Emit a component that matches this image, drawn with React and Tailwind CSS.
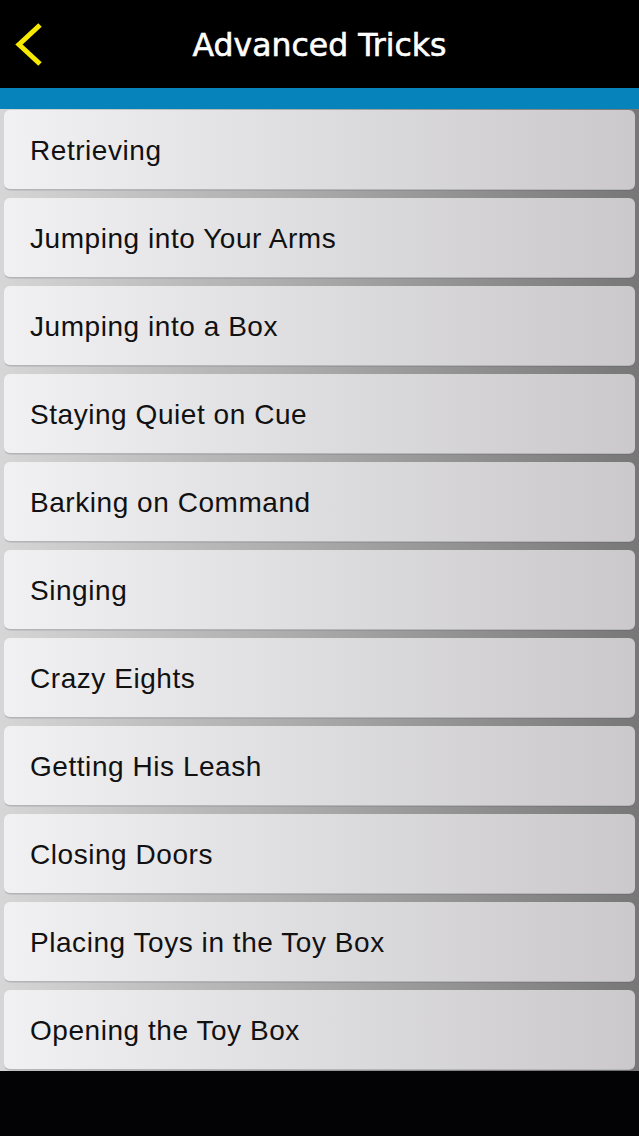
import React from "react";

const items = [
  "Retrieving",
  "Jumping into Your Arms",
  "Jumping into a Box",
  "Staying Quiet on Cue",
  "Barking on Command",
  "Singing",
  "Crazy Eights",
  "Getting His Leash",
  "Closing Doors",
  "Placing Toys in the Toy Box",
  "Opening the Toy Box",
];

export default function App() {
  return (
    <div className="w-[639px] h-[1136px] bg-black flex flex-col overflow-hidden">
      <div className="h-[88px] bg-black flex items-center justify-center relative">
        <svg
          className="absolute left-[12px] top-[22px]"
          width="34"
          height="46"
          viewBox="0 0 34 46"
        >
          <path
            d="M28 3 L7 22.5 L28 42"
            fill="none"
            stroke="#f7ea00"
            strokeWidth="5"
            strokeLinecap="butt"
            strokeLinejoin="miter"
          />
        </svg>
        <span
          className="text-white text-[31.5px] leading-none mt-[3px] [-webkit-text-stroke:0.6px_white]"
          style={{ fontFamily: '"DejaVu Sans", sans-serif' }}
        >
          Advanced Tricks
        </span>
      </div>
      <div className="h-[21px] bg-[#0683bb]" />
      <div className="flex flex-col gap-[8px] pt-[1px] pb-[1px] pl-[4px] pr-[4px] bg-gradient-to-r from-[#d6d6d6] via-[#a8a8a8] to-[#777777]">
        {items.map((t) => (
          <div
            key={t}
            className="h-[80px] rounded-[6px] flex items-center pl-[26px] bg-gradient-to-r from-[#f1f1f3] via-[#dddcdf] to-[#cbc9cc] border-b border-[#b5b4b6] shadow-[0_1px_0_rgba(0,0,0,0.08)]"
          >
            <span
              className="text-[28px] tracking-[0.55px] text-[#111111] leading-none mt-[2px]"
              style={{ fontFamily: '"Liberation Sans", Arial, sans-serif' }}
            >
              {t}
            </span>
          </div>
        ))}
      </div>
      <div className="flex-1 bg-[#030205]" />
    </div>
  );
}
